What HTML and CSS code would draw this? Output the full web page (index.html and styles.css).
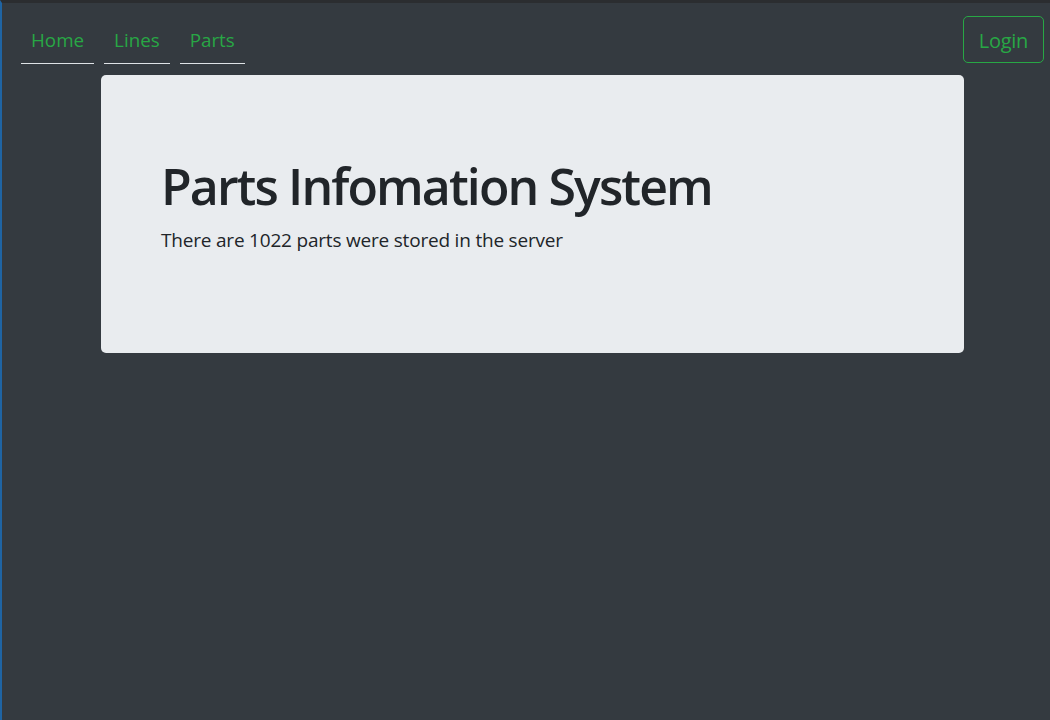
FILE: index.html
```html
<!DOCTYPE html>
<html lang="en">
<head>
<meta charset="utf-8">
<title>Parts Infomation System</title>
<link rel="stylesheet" href="styles.css">
</head>
<body>
<div class="app">
  <header class="navbar">
    <ul class="nav">
      <li><a class="nav-link" href="#">Home</a></li>
      <li><a class="nav-link" href="#">Lines</a></li>
      <li><a class="nav-link" href="#">Parts</a></li>
    </ul>
    <button class="btn-login" type="button">Login</button>
  </header>
  <main class="container">
    <section class="jumbotron">
      <h1 class="title">Parts Infomation System</h1>
      <p class="lead">There are 1022 parts were stored in the server</p>
    </section>
  </main>
</div>
</body>
</html>
```
FILE: styles.css
```css
* { box-sizing: border-box; }
html, body { margin: 0; padding: 0; height: 100%; }
body {
  background: #343a40;
  font-family: "Open Sans", "Noto Sans", sans-serif;
  color: #212529;
}
.app {
  min-height: 100%;
  height: 720px;
  border-top: 3px solid #2b2d30;
  border-left: 2px solid #1f64a3;
}
.navbar {
  display: flex;
  justify-content: space-between;
  align-items: flex-start;
  padding: 13px 6px 0 19px;
  height: 72px;
}
.nav {
  list-style: none;
  margin: 0;
  padding: 0;
  display: flex;
  gap: 10px;
}
.nav-link {
  display: block;
  color: #28a745;
  text-decoration: none;
  font-size: 18.8px;
  line-height: 26px;
  padding: 11px 10px 10px;
  border-bottom: 1px solid #dee2e6;
}
.btn-login {
  font-family: inherit;
  font-size: 20px;
  color: #28a745;
  background: transparent;
  border: 1px solid #28a745;
  border-radius: 5px;
  padding: 2px 15px 0;
  height: 47px;
  margin-top: 0;
  letter-spacing: -0.3px;
}
.container {
  padding-left: 99px;
}
.jumbotron {
  width: 863px;
  height: 278px;
  background: #e9ecef;
  border-radius: 5px;
  padding: 81px 60px 0;
}
.title {
  margin: 0 0 10px;
  font-size: 50px;
  font-weight: 600;
  line-height: 60px;
  letter-spacing: -1.9px;
}
.lead {
  margin: 0;
  font-size: 19px;
  line-height: 28px;
  letter-spacing: -0.2px;
}
```
